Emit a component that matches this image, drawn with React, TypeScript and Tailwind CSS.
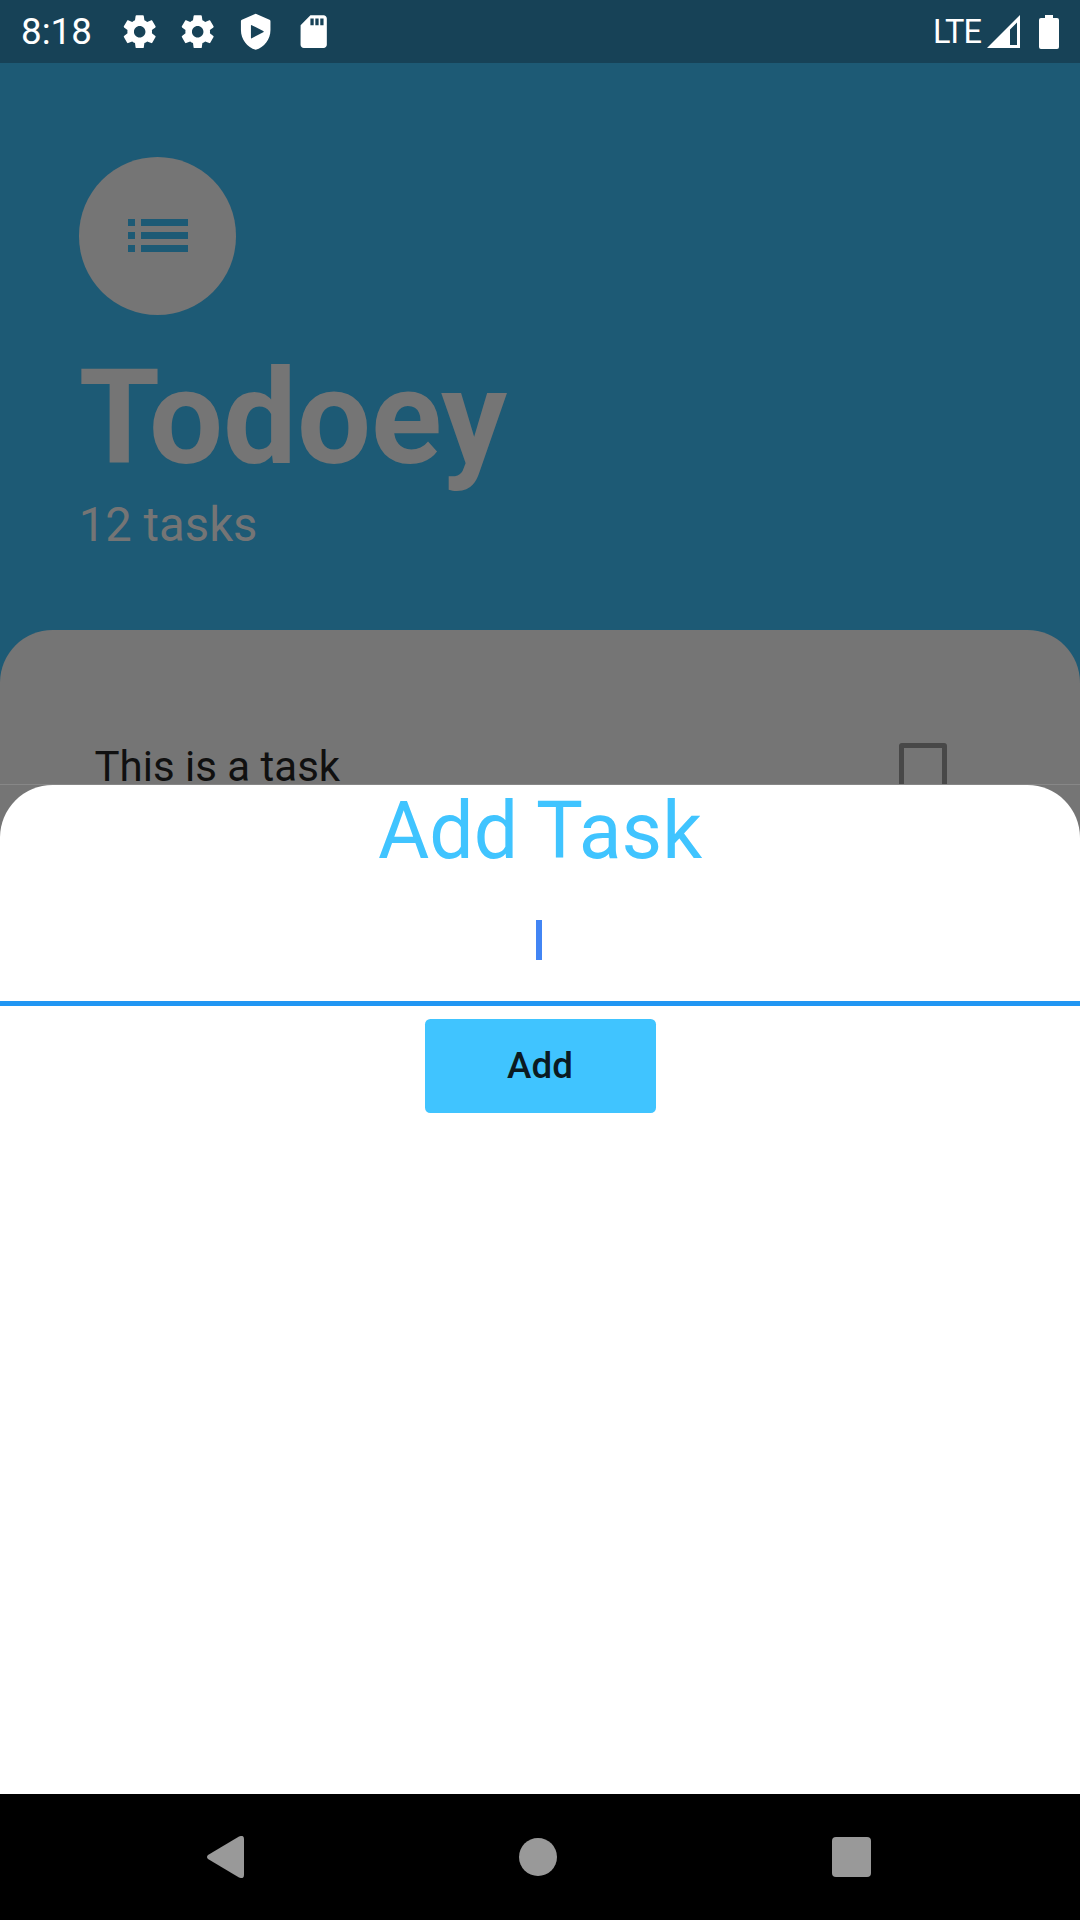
import React from "react";

function Gear() {
  return (
    <svg className="size-[39.4px]" viewBox="0 0 24 24" fill="white">
      <path d="M19.43 12.98c.04-.32.07-.64.07-.98s-.03-.66-.07-.98l2.11-1.65c.19-.15.24-.42.12-.64l-2-3.46c-.12-.22-.39-.3-.61-.22l-2.49 1c-.52-.4-1.08-.73-1.69-.98l-.38-2.65C14.46 2.18 14.25 2 14 2h-4c-.25 0-.46.18-.49.42l-.38 2.65c-.61.25-1.17.59-1.69.98l-2.49-1c-.23-.09-.49 0-.61.22l-2 3.46c-.13.22-.07.49.12.64l2.11 1.65c-.04.32-.07.65-.07.98s.03.66.07.98l-2.11 1.65c-.19.15-.24.42-.12.64l2 3.46c.12.22.39.3.61.22l2.49-1c.52.4 1.08.73 1.69.98l.38 2.65c.03.24.24.42.49.42h4c.25 0 .46-.18.49-.42l.38-2.65c.61-.25 1.17-.59 1.69-.98l2.49 1c.23.09.49 0 .61-.22l2-3.46c.12-.22.07-.49-.12-.64l-2.11-1.65zM12 15.5c-1.93 0-3.5-1.57-3.5-3.5s1.57-3.5 3.5-3.5 3.5 1.57 3.5 3.5-1.57 3.5-3.5 3.5z" />
    </svg>
  );
}

function StatusBar() {
  return (
    <div className="flex h-[63px] shrink-0 items-center justify-between bg-[#174257] pr-[21px] pl-[21px]">
      <div className="flex items-center">
        <span className="w-[99.3px] text-[36.75px] leading-[63px] text-white">8:18</span>
        <div className="flex items-center gap-[18.6px]">
          <Gear />
          <Gear />
          <svg className="size-[39.4px]" viewBox="0 0 24 24" fill="white">
            <path
              fillRule="evenodd"
              d="M11.6 1.2q.4-.2.8 0L20.4 4.7q.6.3.6.9V11c0 5.55-3.84 10.74-9 12-5.16-1.26-9-6.45-9-12V5.6q0-.6.6-.9zM9.1 8.3v7.4q0 .6.5.3l7-3.6q.6-.4 0-.8l-7-3.6q-.5-.3-.5.3z"
            />
          </svg>
          <svg className="size-[39.4px]" viewBox="0 0 24 24" fill="white">
            <path d="M18 2h-8L4.02 8 4 20c0 1.1.9 2 2 2h12c1.1 0 2-.9 2-2V4c0-1.1-.9-2-2-2zm-6 6h-2V4h2v4zm3 0h-2V4h2v4zm3 0h-2V4h2v4z" />
          </svg>
        </div>
      </div>
      <div className="flex items-center">
        <span className="mr-[6px] text-[32.5px] leading-[60px] tracking-[-1px] text-white">LTE</span>
        <svg className="mr-[19px] h-[33px] w-[33px]" viewBox="0 0 33 33" fill="white">
          <path fillRule="evenodd" d="M0 33 33 0V33zM23 14.5V30H30V7.5z" />
        </svg>
        <svg className="h-[34px] w-[20px]" viewBox="0 0 20 34" fill="white">
          <path d="M6 0h8v3h4q2 0 2 2v27q0 2-2 2H2q-2 0-2-2V5q0-2 2-2h4z" />
        </svg>
      </div>
    </div>
  );
}

function Header() {
  return (
    <header className="flex h-[567px] shrink-0 flex-col items-start pt-[94px] pl-[78.75px] text-[#757575]">
      <div className="flex size-[157.5px] items-center justify-center rounded-full bg-[#757575]">
        <svg className="h-[33px] w-[60px]" viewBox="0 0 60 33" fill="#1d5a75">
          <path d="M0 0h7v7H0zM13 0h47v7H13zM0 13h7v7H0zM13 13h47v7H13zM0 26h7v7H0zM13 26h47v7H13z" />
        </svg>
      </div>
      <h1 className="mt-[26px] text-[131.25px] leading-[154px] font-bold">Todoey</h1>
      <p className="mt-[2px] text-[47.25px] leading-[56px]">12 tasks</p>
    </header>
  );
}

function TaskList() {
  return (
    <main className="h-[154px] shrink-0 overflow-hidden rounded-t-[52.5px] bg-[#757575] pt-[102px]">
      <div className="flex items-start justify-between pr-[133px] pl-[94.5px]">
        <span className="mt-[10px] text-[42px] leading-[49px] text-[#101010]">This is a task</span>
        <div className="mt-[11px] size-[48px] rounded-[3px] border-[5.25px] border-[#484848]" />
      </div>
    </main>
  );
}

function AddTaskSheet() {
  return (
    <div className="min-h-0 flex-1 border-t border-[#878787] bg-[#757575]">
      <section className="flex h-full flex-col items-center rounded-t-[52.5px] bg-white">
        <h2 className="text-[78.75px] leading-[92px] text-[#40c4ff]">Add Task</h2>
        <div className="flex h-[128.5px] w-full justify-center border-b-[5.25px] border-[#2196f3] pt-[43px] pr-[2px]">
          <div className="h-[39.5px] w-[5.25px] bg-[#4285f4]" />
        </div>
        <button className="mt-[13px] h-[94.5px] w-[231px] rounded-[5.25px] bg-[#40c4ff] text-[36.75px] font-medium text-[#0a1a22]">
          Add
        </button>
      </section>
    </div>
  );
}

function NavigationBar() {
  return (
    <nav className="flex h-[126px] shrink-0 items-center bg-black pr-[209px] pl-[207px]">
      <div className="flex flex-1 items-center justify-between">
        <svg className="h-[42px] w-[37px]" viewBox="0 0 37 42" fill="#999999">
          <path d="M1 19 32 .6Q37-1.6 37 3V39Q37 43.600 32 41.400L1 23Q-1 21 1 19z" />
        </svg>
        <div className="size-[38px] rounded-full bg-[#999999]" />
        <div className="size-[39.5px] rounded-[4px] bg-[#999999]" />
      </div>
    </nav>
  );
}

export default function App() {
  return (
    <div className="flex h-[1920px] w-[1080px] flex-col overflow-hidden bg-[#1d5a75] font-[Roboto,sans-serif]">
      <StatusBar />
      <Header />
      <TaskList />
      <AddTaskSheet />
      <NavigationBar />
    </div>
  );
}
